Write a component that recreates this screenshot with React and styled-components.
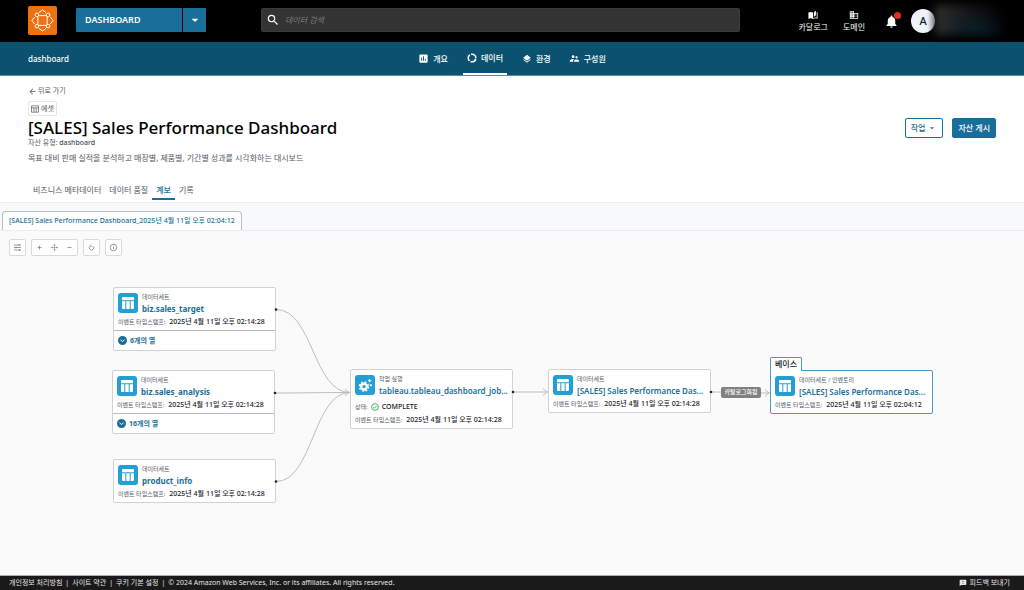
import React from "react";
import styled, { createGlobalStyle, css } from "styled-components";
import {
  MdSearch,
  MdNotifications,
  MdDomain,
  MdAutoStories,
  MdPoll,
  MdLayers,
  MdSupervisorAccount,
  MdArrowBack,
  MdArrowDropDown,
  MdFeedback,
} from "react-icons/md";

const c = {
  blue: "#1a6f9a",
  deep: "#0a5270",
  sky: "#239fd6",
  text: "#545b64",
  dark: "#16191f",
  edge: "#bdbdbd",
};

const GlobalStyle = createGlobalStyle`
  *, *::before, *::after { box-sizing: border-box; }
  body {
    margin: 0;
    background: #fafafa;
    color: ${c.text};
    font: 400 8px/12px "Noto Sans", "Noto Sans CJK KR", sans-serif;
  }
  button, input { font: inherit; color: inherit; margin: 0; }
  button { cursor: pointer; padding: 0; border: 0; background: none; }
  a { color: inherit; text-decoration: none; }
  h1, p, ul { margin: 0; padding: 0; }
  svg { display: block; flex: none; }
`;

const Page = styled.div`
  display: flex;
  flex-direction: column;
  min-height: 100vh;
`;

const TopBar = styled.header`
  display: flex;
  align-items: center;
  height: 42px;
  padding: 0 21px 2px 28px;
  background: #000;
  color: #fff;
`;

const HomeLink = styled.a`
  display: grid;
  place-items: center;
  width: 29px;
  height: 29px;
  border-radius: 2px;
  background: #ec7211;
`;

const ProjectPicker = styled.div`
  display: flex;
  flex: none;
  gap: 1px;
  width: 130px;
  height: 24px;
  margin: 0 55px 0 19px;
`;

const ProjectName = styled.button`
  flex: 1;
  padding-left: 9px;
  border-radius: 1px 0 0 1px;
  background: ${c.blue};
  font-size: 9px;
  font-weight: 600;
  text-align: left;
`;

const ProjectToggle = styled.button`
  display: grid;
  place-items: center;
  width: 23px;
  border-radius: 0 1px 1px 0;
  background: ${c.blue};
`;

const SearchBox = styled.label`
  display: flex;
  flex: 1;
  align-items: center;
  gap: 5px;
  height: 24px;
  margin-right: 58px;
  padding-left: 4px;
  border: 1px solid #3b3b3b;
  border-radius: 2px;
  background: #333;
`;

const SearchInput = styled.input`
  flex: 1;
  min-width: 0;
  padding: 0;
  border: 0;
  outline: 0;
  background: none;
  &::placeholder { color: #7c7c7c; font-style: italic; opacity: 1; }
`;

const TopLink = styled.a`
  display: flex;
  flex-direction: column;
  align-items: center;
  gap: 1px;
  margin-right: 15px;
  padding-top: 2px;
  white-space: nowrap;
`;

const BellButton = styled.button`
  position: relative;
  margin: 3px 12px 0 4px;
`;

const BellDot = styled.span`
  position: absolute;
  top: -2px;
  right: -2px;
  width: 7px;
  height: 7px;
  border-radius: 50%;
  background: #e0301e;
`;

const Avatar = styled.span`
  display: grid;
  place-items: center;
  width: 24px;
  height: 24px;
  margin-top: 2px;
  border-radius: 50%;
  background: linear-gradient(90deg, #eff3fa 70%, #b9bdc4);
  color: #16191f;
  font-size: 11px;
  font-weight: 500;
`;

const ProfileHaze = styled.span`
  width: 68px;
  height: 30px;
  background:
    radial-gradient(ellipse at 60% 100%, #06222f, transparent 60%),
    linear-gradient(90deg, #2e3030, #161616 50%, #000);
  filter: blur(4px);
`;

const ProjectBar = styled.nav`
  display: grid;
  grid-template-columns: 1fr auto 1fr;
  align-items: stretch;
  height: 34px;
  padding: 0 28px;
  border-bottom: 1px solid #5c8ca3;
  background: ${c.deep};
  color: #fff;
`;

const ProjectTitle = styled.span`
  align-self: center;
  font-size: 8px;
  font-weight: 500;
`;

const ProjectTabs = styled.div`
  display: flex;
  gap: 12px;
`;

const ProjectTab = styled.a`
  display: flex;
  align-items: center;
  gap: 4px;
  padding: 0 3px;
  font-weight: 500;
  ${(p) => p.$active && css`
    padding: 0 4px;
    border-bottom: 2px solid #fff;
  `}
`;

const AssetHeader = styled.section`
  padding: 9px 28px 2px;
  border-bottom: 1px solid #eceeef;
  background: #fff;
`;

const BackLink = styled.a`
  display: flex;
  align-items: center;
  gap: 1px;
  font-size: 7px;
  line-height: 12px;
`;

const AssetBadge = styled.span`
  display: inline-flex;
  align-items: center;
  gap: 2px;
  height: 15px;
  margin-top: 4px;
  padding: 0 2px;
  border: 1px solid #e4e7e7;
  border-radius: 2px;
  font-size: 7px;
`;

const TitleRow = styled.div`
  display: flex;
  justify-content: space-between;
  align-items: center;
`;

const AssetTitle = styled.h1`
  color: #000;
  font-size: 17px;
  font-weight: 500;
  line-height: 23px;
`;

const Actions = styled.div`
  display: flex;
  gap: 9px;
`;

const ActionButton = styled.button`
  display: flex;
  align-items: center;
  gap: 2px;
  height: 20px;
  padding: 0 5px;
  border: 1px solid ${c.blue};
  border-radius: 2px;
  background: ${(p) => (p.$primary ? c.blue : "#fff")};
  color: ${(p) => (p.$primary ? "#fff" : c.blue)};
  font-size: 8px;
  font-weight: 500;
`;

const AssetType = styled.p`
  font-size: 7px;
  line-height: 8px;
  strong { color: #414d5c; font-weight: 500; }
`;

const Description = styled.p`
  margin-top: 4px;
  line-height: 14px;
`;

const AssetTabs = styled.nav`
  display: flex;
  margin-top: 15px;
  padding-left: 1px;
`;

const AssetTab = styled.a`
  height: 20px;
  padding: 4px 4px 0;
  border-bottom: 2px solid transparent;
  ${(p) => p.$active && css`
    border-color: ${c.blue};
    color: ${c.blue};
    font-weight: 500;
  `}
`;

const SnapshotBar = styled.div`
  display: flex;
  padding: 8px 2px 0;
  border-bottom: 1px solid #e9ecef;
  background: #f7f9fa;
`;

const SnapshotTab = styled.button`
  height: 19px;
  padding: 0 6px;
  border: 1px solid #b6bec9;
  border-bottom: 0;
  border-radius: 4px 4px 0 0;
  background: #fff;
  color: ${c.blue};
  font-size: 7px;
  font-weight: 500;
`;

const Canvas = styled.main`
  position: relative;
  flex: 1;
  min-height: 344px;
  background: #fafafa;
`;

const Toolbar = styled.div`
  display: flex;
  gap: 5px;
  padding: 8px 9px;
`;

const ToolGroup = styled.div`
  display: flex;
  height: 17px;
  border: 1px solid #d9d9d9;
  border-radius: 2px;
  background: #fff;
`;

const Tool = styled.button`
  display: grid;
  place-items: center;
  width: 15px;
  color: #7d848b;
`;

const Edges = styled.svg`
  position: absolute;
  inset: 0;
  width: 100%;
  height: 100%;
  pointer-events: none;
`;

const Node = styled.article`
  position: absolute;
  left: ${(p) => p.$x}px;
  top: ${(p) => p.$y}px;
  width: 163px;
  border: 1px solid ${(p) => (p.$base ? "#4d9cbf" : "#d2d2d2")};
  border-radius: ${(p) => (p.$base ? "0 2px 2px 2px" : "2px")};
  background: #fff;
`;

const NodeTag = styled.span`
  position: absolute;
  left: -1px;
  bottom: 100%;
  height: 14px;
  padding: 0 4px;
  border: 1px solid #4d9cbf;
  border-bottom: 0;
  border-radius: 2px 2px 0 0;
  background: #fff;
  color: ${c.dark};
  font-size: 8px;
  font-weight: 500;
  line-height: 12px;
`;

const NodeBody = styled.div`
  padding: 5px 0 2px 4px;
`;

const NodeHead = styled.div`
  display: flex;
  gap: 4px;
`;

const NodeIcon = styled.span`
  display: grid;
  flex: none;
  place-items: center;
  width: 20px;
  height: 20px;
  border-radius: 3px;
  background: ${c.sky};
  color: #fff;
`;

const NodeNames = styled.div`
  min-width: 0;
`;

const NodeKind = styled.p`
  font-size: 6px;
  line-height: 9px;
`;

const NodeName = styled.a`
  display: block;
  color: ${c.blue};
  font-size: 8px;
  font-weight: ${(p) => (p.$long ? 600 : 700)};
  line-height: 14px;
  white-space: nowrap;
`;

const NodeFact = styled.p`
  display: flex;
  align-items: center;
  gap: 4px;
  font-size: 6px;
  line-height: 12px;
  white-space: nowrap;
  strong { color: ${c.dark}; font-size: 7px; font-weight: 500; }
`;

const NodeStatus = styled(NodeFact)`
  gap: 3px;
  margin: 3px 0 1px;
`;

const ColumnsToggle = styled.button`
  display: flex;
  align-items: center;
  gap: 3px;
  width: 100%;
  height: 20px;
  padding: 0 4px;
  border-top: 1px solid #b8bcbf;
  color: ${c.blue};
  font-size: 7px;
  font-weight: 700;
`;

const EdgeLabel = styled.span`
  position: absolute;
  left: 721px;
  top: 156px;
  width: 40px;
  border-radius: 2px;
  background: #808080;
  color: #fff;
  font-size: 6px;
  font-weight: 500;
  line-height: 11px;
  text-align: center;
  white-space: nowrap;
`;

const Footer = styled.footer`
  display: flex;
  align-items: center;
  justify-content: space-between;
  height: 15px;
  padding: 0 14px 0 9px;
  border-top: 1px solid #aab0b0;
  background: #1a1a1a;
  color: #e6e6e6;
  font-size: 7px;
`;

const Legal = styled.div`
  display: flex;
  gap: 3px;
`;

const FeedbackButton = styled.button`
  display: flex;
  align-items: center;
  gap: 3px;
`;

const Logo = () => (
  <svg width="23" height="23" viewBox="0 0 23 23" fill="none" stroke="#fff" strokeWidth="1">
    <path d="M8 3.6 11.5.9 15 3.6M8 19.4l3.5 2.7 3.5-2.7M3.6 8 .9 11.5 3.6 15M19.4 8l2.7 3.5-2.7 3.5" />
    <path d="M8 6.6h7M8 16.4h7M6.9 7.5v8M16.1 7.5v8" />
    {[5.9, 17.1].map((x) => [5.9, 17.1].map((y) => (
      <circle key={x + "-" + y} cx={x} cy={y} r="1.8" fill="#ec7211" />
    )))}
  </svg>
);

const Ring = () => (
  <svg width="10" height="10" viewBox="0 0 10 10" fill="none" stroke="currentColor" strokeWidth="1.6">
    <circle cx="5" cy="5" r="3.8" strokeDasharray="6.76 1.2" strokeDashoffset="-0.6" />
  </svg>
);

const BadgeTable = () => (
  <svg width="8" height="8" viewBox="0 0 8 8" fill="none" stroke="currentColor" strokeWidth=".7">
    <path d="M.5.8h7v6.4h-7zM.5 2.8h7M3 2.8v4.4M5.2 2.8v4.4" />
  </svg>
);

const TableIcon = () => (
  <svg width="14" height="14" viewBox="0 0 14 14" fill="currentColor">
    <path d="M2 1h10a1 1 0 0 1 1 1v2.2H1V2a1 1 0 0 1 1-1zM1 5.2h3.3V13H2a1 1 0 0 1-1-1zM5.3 5.2h3.4V13H5.3zM9.7 5.2H13V12a1 1 0 0 1-1 1H9.7z" />
  </svg>
);

const GearIcon = () => (
  <svg width="15" height="15" viewBox="0 0 15 15" fill="none" stroke="currentColor">
    <circle cx="6" cy="8.6" r="2.9" strokeWidth="2.4" />
    <circle cx="6" cy="8.6" r="4.6" strokeWidth="1.4" strokeDasharray="1.9 1.71" />
    <path d="M11.6 1v3.4M9.9 2.7h3.4M12.9 6v2.4M11.7 7.2h2.4" strokeWidth="1" />
  </svg>
);

const ChevronBadge = () => (
  <svg width="9" height="9" viewBox="0 0 9 9">
    <circle cx="4.5" cy="4.5" r="4.5" fill={c.blue} />
    <path d="M2.5 3.8l2 1.7 2-1.7" fill="none" stroke="#fff" strokeWidth="1" />
  </svg>
);

const CheckBadge = () => (
  <svg width="8" height="8" viewBox="0 0 8 8" fill="none" stroke="#37b24a" strokeWidth=".9">
    <circle cx="4" cy="4" r="3.4" />
    <path d="M2.3 4.1l1.2 1.2 2.3-2.4" />
  </svg>
);

const Glyph = ({ d }) => (
  <svg width="9" height="9" viewBox="0 0 9 9" fill="none" stroke="currentColor" strokeWidth=".8">
    <path d={d} />
  </svg>
);

const tools = [
  [["필터", "M1 2h7M1 4.5h7M1 7h7M6 1v2M3 3.5v2M6.5 6v2"]],
  [
    ["확대", "M4.5 2.5v4M2.5 4.5h4"],
    ["맞춤", "M4.5 1.6v2M4.5 5.4v2M1.6 4.5h2M5.4 4.5h2M4 4.5h1M3.7 2.4l.8-.8.8.8M3.7 6.6l.8.8.8-.8M2.4 3.7l-.8.8.8.8M6.6 3.7l.8.8-.8.8"],
    ["축소", "M2.5 4.5h4"],
  ],
  [["새로 고침", "M3.4 3a2.2 2.2 0 1 0 2.2 0M3.2 1.8L4.4 2.8L3.6 3.6"]],
  [["정보", "M4.5 1.2a3.3 3.3 0 1 1 0 6.6a3.3 3.3 0 1 1 0-6.6M4.5 4v2.3M4.5 2.6v.8"]],
];

const nodes = [
  { x: 113, y: 56, kind: "데이터세트", name: "biz.sales_target", time: "02:14:28", columns: "6개의 열" },
  { x: 112, y: 139, kind: "데이터세트", name: "biz.sales_analysis", time: "02:14:28", columns: "16개의 열" },
  { x: 113, y: 228, kind: "데이터세트", name: "product_info", time: "02:14:28" },
  { x: 350, y: 138, kind: "작업 실행", name: "tableau.tableau_dashboard_job...", time: "02:14:28", status: "COMPLETE" },
  { x: 548, y: 138, kind: "데이터세트", name: "[SALES] Sales Performance Das...", time: "02:14:28" },
  { x: 770, y: 139, kind: "데이터세트 / 인벤토리", name: "[SALES] Sales Performance Das...", time: "02:04:12", base: "베이스" },
];

const edges = [
  "M276 78.5C313 78.5 313 161.5 350 161.5",
  "M275 162C310 162 310 161.5 350 161.5",
  "M276 250.5C313 250.5 313 161.5 350 161.5",
  "M513 161H548",
  "M711 161C740 161 740 162 770 162",
];
const heads = [[350, 161.5], [548, 161], [770, 162]];
const ports = [[276, 78.5], [275, 162], [276, 250.5], [513, 161], [711, 161]];

function LineageNode({ node }) {
  return (
    <Node $x={node.x} $y={node.y} $base={!!node.base}>
      {node.base && <NodeTag>{node.base}</NodeTag>}
      <NodeBody>
        <NodeHead>
          <NodeIcon>{node.status ? <GearIcon /> : <TableIcon />}</NodeIcon>
          <NodeNames>
            <NodeKind>{node.kind}</NodeKind>
            <NodeName href="#" $long={node.name.length > 31}>{node.name}</NodeName>
          </NodeNames>
        </NodeHead>
        {node.status && (
          <NodeStatus>
            <span>상태:</span>
            <CheckBadge />
            <strong>{node.status}</strong>
          </NodeStatus>
        )}
        <NodeFact>
          <span>이벤트 타임스탬프:</span>
          <strong>2025년 4월 11일 오후 {node.time}</strong>
        </NodeFact>
      </NodeBody>
      {node.columns && (
        <ColumnsToggle>
          <ChevronBadge />
          {node.columns}
        </ColumnsToggle>
      )}
    </Node>
  );
}

export default function App() {
  return (
    <Page>
      <GlobalStyle />
      <TopBar>
        <HomeLink href="#" aria-label="홈"><Logo /></HomeLink>
        <ProjectPicker>
          <ProjectName>DASHBOARD</ProjectName>
          <ProjectToggle aria-label="프로젝트 선택"><MdArrowDropDown size={16} /></ProjectToggle>
        </ProjectPicker>
        <SearchBox>
          <MdSearch size={14} />
          <SearchInput placeholder="데이터 검색" aria-label="데이터 검색" />
        </SearchBox>
        <TopLink href="#"><MdAutoStories size={10} />카달로그</TopLink>
        <TopLink href="#"><MdDomain size={10} />도메인</TopLink>
        <BellButton aria-label="알림"><MdNotifications size={15} /><BellDot /></BellButton>
        <Avatar>A</Avatar>
        <ProfileHaze />
      </TopBar>
      <ProjectBar>
        <ProjectTitle>dashboard</ProjectTitle>
        <ProjectTabs>
          <ProjectTab href="#"><MdPoll size={11} />개요</ProjectTab>
          <ProjectTab href="#" $active><Ring />데이터</ProjectTab>
          <ProjectTab href="#"><MdLayers size={10} />환경</ProjectTab>
          <ProjectTab href="#"><MdSupervisorAccount size={11} />구성원</ProjectTab>
        </ProjectTabs>
      </ProjectBar>
      <AssetHeader>
        <BackLink href="#"><MdArrowBack size={9} />뒤로 가기</BackLink>
        <AssetBadge><BadgeTable />에셋</AssetBadge>
        <TitleRow>
          <AssetTitle>[SALES] Sales Performance Dashboard</AssetTitle>
          <Actions>
            <ActionButton>작업<MdArrowDropDown size={10} /></ActionButton>
            <ActionButton $primary>자산 게시</ActionButton>
          </Actions>
        </TitleRow>
        <AssetType>자산 유형: <strong>dashboard</strong></AssetType>
        <Description>목표 대비 판매 실적을 분석하고 매장별, 제품별, 기간별 성과를 시각화하는 대시보드</Description>
        <AssetTabs>
          <AssetTab href="#">비즈니스 메타데이터</AssetTab>
          <AssetTab href="#">데이터 품질</AssetTab>
          <AssetTab href="#" $active>계보</AssetTab>
          <AssetTab href="#">기록</AssetTab>
        </AssetTabs>
      </AssetHeader>
      <SnapshotBar>
        <SnapshotTab>[SALES] Sales Performance Dashboard_2025년 4월 11일 오후 02:04:12</SnapshotTab>
      </SnapshotBar>
      <Canvas>
        <Toolbar>
          {tools.map((group) => (
            <ToolGroup key={group[0][0]}>
              {group.map(([label, d]) => (
                <Tool key={label} aria-label={label}><Glyph d={d} /></Tool>
              ))}
            </ToolGroup>
          ))}
        </Toolbar>
        {nodes.map((node) => (
          <LineageNode key={node.x + "-" + node.y} node={node} />
        ))}
        <Edges fill="none" stroke={c.edge}>
          {edges.map((d) => <path key={d} d={d} />)}
          {heads.map(([x, y]) => (
            <path key={x} d={`M${x - 5} ${y - 3.5}L${x - 1} ${y}L${x - 5} ${y + 3.5}`} />
          ))}
          {ports.map(([x, y]) => (
            <circle key={x + "-" + y} cx={x} cy={y} r="1.3" fill="#222" stroke="none" />
          ))}
        </Edges>
        <EdgeLabel>카탈로그화됨</EdgeLabel>
      </Canvas>
      <Footer>
        <Legal>
          <a href="#">개인정보 처리방침</a>
          <span>|</span>
          <a href="#">사이트 약관</a>
          <span>|</span>
          <a href="#">쿠키 기본 설정</a>
          <span>|</span>
          <span>© 2024 Amazon Web Services, Inc. or its affiliates. All rights reserved.</span>
        </Legal>
        <FeedbackButton><MdFeedback size={8} />피드백 보내기</FeedbackButton>
      </Footer>
    </Page>
  );
}
